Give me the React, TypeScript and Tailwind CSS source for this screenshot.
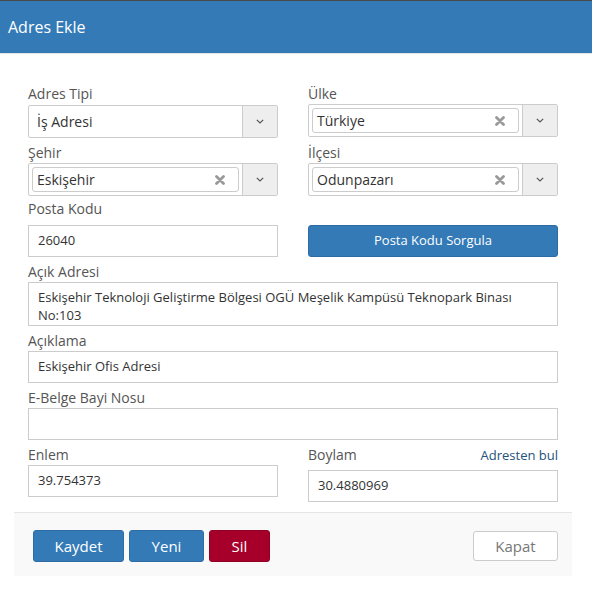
import React from 'react';

const Chevron = () => (
  <svg width="8" height="5" viewBox="0 0 8 5" fill="none">
    <polyline points="0.8,0.8 4,4 7.2,0.8" stroke="#555" strokeWidth="1.2" />
  </svg>
);

const Clear = () => (
  <svg width="10" height="10" viewBox="0 0 10 10">
    <path d="M1.5 1.5 L8.5 8.5 M8.5 1.5 L1.5 8.5" stroke="#999" strokeWidth="2.8" strokeLinecap="round" />
  </svg>
);

// select kutusu, clearable ise içte yuvarlak bir kutu daha var
const Select = ({ value, clearable }: { value: string; clearable?: boolean }) => (
  <div className="flex h-[33px] rounded-[2px] border border-[#ccc] bg-white">
    <div className="flex min-w-0 flex-1 items-center">
      {clearable ? (
        <div className="mx-[3px] flex h-[25px] flex-1 items-center justify-between rounded-[3px] border border-[#ccc] pl-[4px] pr-[13px] text-[14px] text-[#333]">
          <span>{value}</span>
          <Clear />
        </div>
      ) : (
        <span className="pl-[8px] text-[14px] text-[#333]">{value}</span>
      )}
    </div>
    <div className="flex w-[35px] items-center justify-center border-l border-[#ccc] bg-[#eee]">
      <Chevron />
    </div>
  </div>
);

const Label = ({ children }: { children: React.ReactNode }) => (
  <div className="h-[20px] text-[14px] leading-[20px] text-[#555]">{children}</div>
);

const Input = ({ value }: { value?: string }) => (
  <div className="flex h-[32px] items-center border border-[#ccc] bg-white px-[9px] text-[13px] text-[#333]">
    {value}
  </div>
);

export default function App() {
  return (
    <div className="h-[593px] w-[592px] overflow-hidden bg-white font-['Open_Sans','Liberation_Sans',sans-serif]">
      <div className="border-t border-[#4a4a4a]">
        <div className="flex h-[53px] items-center border-b border-[#e5e5e5] bg-[#337ab7] pl-[8px] text-[16px] text-white">
          Adres Ekle
        </div>
      </div>

      <div className="pl-[28px] pr-[34px] pt-[30px]">
        <div className="grid grid-cols-2 gap-x-[30px]">
          <div>
            <Label>Adres Tipi</Label>
            <div className="mt-[1px]">
              <Select value="İş Adresi" />
            </div>
          </div>
          <div>
            <Label>Ülke</Label>
            <Select value="Türkiye" clearable />
          </div>
          <div className="mt-[5px]">
            <Label>Şehir</Label>
            <Select value="Eskişehir" clearable />
          </div>
          <div className="mt-[5px]">
            <Label>İlçesi</Label>
            <Select value="Odunpazarı" clearable />
          </div>
          <div className="mt-[3px]">
            <Label>Posta Kodu</Label>
            <div className="mt-[6px]">
              <Input value="26040" />
            </div>
          </div>
          <div className="mt-[3px] flex flex-col justify-end">
            <button className="h-[32px] rounded-[3px] border border-[#2e6da4] bg-[#337ab7] text-[13px] text-white">
              Posta Kodu Sorgula
            </button>
          </div>
        </div>

        <div className="mt-[5px]">
          <Label>Açık Adresi</Label>
          <div className="h-[44px] border border-[#ccc] px-[9px] pt-[5px] text-[13px] leading-[18px] text-[#333]">
            Eskişehir Teknoloji Geliştirme Bölgesi OGÜ Meşelik Kampüsü Teknopark Binası No:103
          </div>
        </div>

        <div className="mt-[5px]">
          <Label>Açıklama</Label>
          <Input value="Eskişehir Ofis Adresi" />
        </div>

        <div className="mt-[5px]">
          <Label>E-Belge Bayi Nosu</Label>
          <Input />
        </div>

        <div className="mt-[5px] grid grid-cols-2 gap-x-[30px]">
          <div>
            <Label>Enlem</Label>
            <Input value="39.754373" />
          </div>
          <div>
            <div className="flex justify-between">
              <Label>Boylam</Label>
              <span className="text-[13px] leading-[20px] text-[#23527c]">Adresten bul</span>
            </div>
            <div className="mt-[5px]">
              <Input value="30.4880969" />
            </div>
          </div>
        </div>
      </div>

      <div className="ml-[14px] mr-[20px] mt-[10px] flex h-[64px] items-start border-t border-[#e5e5e5] bg-[#f9f9f9] pl-[19px] pr-[14px] pt-[17px]">
        <div className="flex gap-[5px]">
          <button className="h-[32px] w-[91px] rounded-[3px] border border-[#2e6da4] bg-[#337ab7] text-[15px] text-white">
            Kaydet
          </button>
          <button className="h-[32px] w-[75px] rounded-[3px] border border-[#2e6da4] bg-[#337ab7] text-[15px] text-white">
            Yeni
          </button>
          <button className="h-[32px] w-[61px] rounded-[3px] border border-[#8f0024] bg-[#a6002a] text-[15px] text-white">
            Sil
          </button>
        </div>
        <button className="ml-auto mt-[1px] h-[30px] w-[85px] rounded-[3px] border border-[#ccc] bg-white text-[15px] text-[#777]">
          Kapat
        </button>
      </div>
    </div>
  );
}
